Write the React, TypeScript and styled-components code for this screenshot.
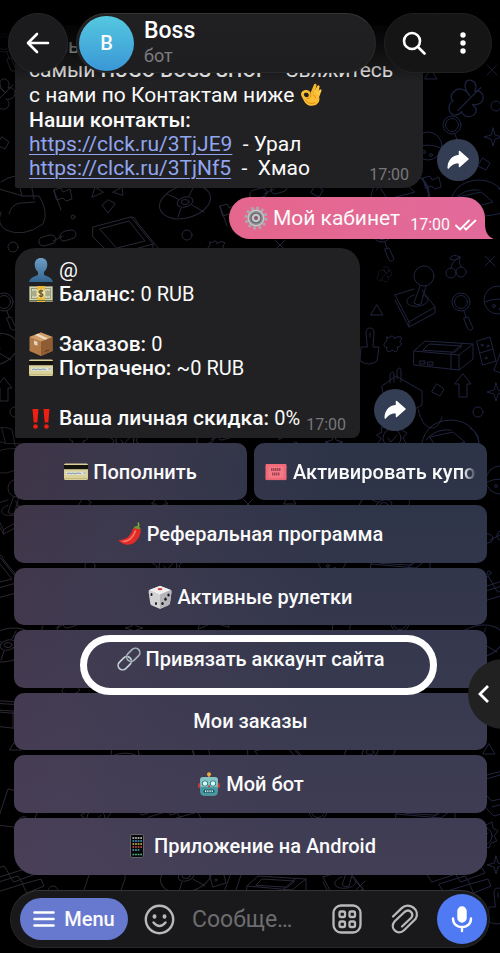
import React from "react";
import styled, { createGlobalStyle, css } from "styled-components";

const GlobalStyle = createGlobalStyle`
  *, *::before, *::after { box-sizing: border-box; }
  html, body { margin: 0; padding: 0; background: #000; }
  body, button, input {
    font-family: Roboto, "Noto Sans", sans-serif;
    color: #fafafa;
  }
  button { border: 0; padding: 0; background: none; cursor: pointer; }
`;

/* ---------- layout ---------- */

const Screen = styled.div`
  position: relative;
  display: flex;
  flex-direction: column;
  height: 100vh;
  overflow: hidden;
  isolation: isolate;
  background: #000;
`;

const WallpaperSvg = styled.svg`
  position: absolute;
  inset: 0;
  width: 100%;
  height: 100%;
  z-index: -1;
`;

const Header = styled.header`
  position: absolute;
  inset: 0 0 auto 0;
  z-index: 2;
  display: flex;
  gap: 8px;
  padding: 13px 8px 12px;
  background: linear-gradient(#000 0, rgba(0, 0, 0, 0.85) 30px, rgba(0, 0, 0, 0.4) 62px, rgba(0, 0, 0, 0) 82px);
`;

const glass = css`
  height: 60px;
  border-radius: 30px;
  border: 1px solid #29292b;
  border-top-color: #353537;
  background: linear-gradient(#202022, #1e1e20);
`;

const BackButton = styled.button`
  ${glass}
  flex: none;
  width: 60px;
  display: grid;
  place-items: center;
  background: #1b1b1d;
  border-color: #262628;
`;

const TitlePill = styled.div`
  ${glass}
  flex: 1;
  min-width: 0;
  display: flex;
  align-items: center;
  gap: 10px;
  padding-left: 2px;
`;

const Avatar = styled.div`
  flex: none;
  width: 55px;
  height: 55px;
  border-radius: 50%;
  display: grid;
  place-items: center;
  background: linear-gradient(#55c8e0, #3a97d6);
  font-size: 20px;
  font-weight: 500;
`;

const Title = styled.h1`
  margin: 0;
  font-size: 23px;
  line-height: 26px;
  font-weight: 500;
  color: #fff;
`;

const Subtitle = styled.div`
  font-size: 18px;
  line-height: 24px;
  color: #7d7d80;
`;

const ActionsPill = styled.div`
  ${glass}
  flex: none;
  width: 108px;
  display: grid;
  grid-template-columns: 1fr 1fr;
  padding: 0 4px;
  background: #151516;
  border-color: #212122;
`;

const IconButton = styled.button`
  display: grid;
  place-items: center;
`;

const Chat = styled.main`
  flex: 1;
  min-height: 0;
  display: flex;
  flex-direction: column;
  justify-content: flex-end;
  padding: 0 13px 15px 14px;
`;

const MessageRow = styled.div<{ $own?: boolean; $gap?: number }>`
  flex: none;
  display: flex;
  align-items: flex-end;
  justify-content: ${(p) => (p.$own ? "flex-end" : "flex-start")};
  gap: 14px;
  margin-bottom: ${(p) => p.$gap ?? 9}px;
  padding: ${(p) => (p.$own ? "0 2px 0 0" : "0 0 0 1px")};
`;

const Bubble = styled.article<{ $wide?: boolean }>`
  position: relative;
  width: ${(p) => (p.$wide ? 408 : 345)}px;
  max-width: 87%;
  padding: ${(p) => (p.$wide ? "9px 14px 8px" : "10px 14px 8px")};
  border-radius: 20px 20px ${(p) => (p.$wide ? 20 : 8)}px 2px;
  background: #212123;
  font-size: 21px;
  line-height: 24px;
  white-space: nowrap;
`;

const Line = styled.div`
  display: flex;
  align-items: center;
  gap: 6px;
  min-height: 24px;
`;

const Paragraph = styled.div`
  margin-bottom: 1px;
`;

const Spacer = styled.div`
  height: 26px;
`;

const Split = styled.div`
  display: flex;
  align-items: flex-end;
  justify-content: space-between;
`;

const Strong = styled.b`
  font-weight: 500;
`;

const Brand = styled(Strong)`
  font-size: 20px;
`;

const Value = styled.span`
  font-size: 20px;
`;

const Link = styled.a`
  color: #91a5f0;
  text-decoration: underline;
  text-decoration-thickness: 1px;
  text-underline-offset: 3px;
`;

const Time = styled.time`
  font-size: 16px;
  line-height: 16px;
  color: #77777b;
  margin-bottom: -3px;
`;

const ShareButton = styled.button`
  flex: none;
  width: 42px;
  height: 42px;
  margin-bottom: 7px;
  border-radius: 50%;
  display: grid;
  place-items: center;
  background: #333d53;
`;

const OwnBubble = styled.article`
  position: relative;
  display: flex;
  align-items: center;
  gap: 5px;
  height: 42px;
  padding: 0 8px 0 15px;
  border-radius: 21px 21px 4px 21px;
  background: linear-gradient(90deg, #e5668d, #e26a9a);
  font-size: 21px;
  white-space: nowrap;
`;

const OwnMeta = styled.span`
  display: flex;
  align-items: center;
  gap: 5px;
  margin: 14px 0 0 5px;
  font-size: 16px;
  line-height: 16px;
`;

const Tail = styled.svg`
  position: absolute;
  right: -8px;
  bottom: 0;
`;

const Keyboard = styled.div`
  flex: none;
  display: grid;
  grid-template-columns: 1fr 1fr;
  grid-template-rows: repeat(7, 1fr);
  column-gap: 7px;
  row-gap: 5px;
  height: 432px;
`;

const Key = styled.button<{ $half?: boolean; $last?: boolean }>`
  position: relative;
  grid-column: ${(p) => (p.$half ? "auto" : "1 / -1")};
  min-width: 0;
  display: flex;
  align-items: center;
  justify-content: center;
  gap: 5px;
  padding: 0 10px;
  border-radius: ${(p) => (p.$last ? "10px 10px 22px 22px" : "10px")};
  background:
    linear-gradient(180deg, rgba(86, 72, 100, 0) 480px, rgba(86, 72, 100, 0.5) 880px) fixed,
    linear-gradient(100deg, #413244 14px, #3b384c 200px, #2d3448 420px) fixed;
  font-size: 20px;
  font-weight: 500;
  white-space: nowrap;
`;

const KeyLabel = styled.span<{ $fade?: boolean }>`
  min-width: 0;
  overflow: hidden;
  ${(p) =>
    p.$fade &&
    css`
      mask-image: linear-gradient(90deg, #000 calc(100% - 14px), transparent);
    `}
`;

const Highlight = styled.span`
  position: absolute;
  z-index: 1;
  top: 5px;
  left: 66px;
  right: 50px;
  height: 60px;
  border: 7px solid #fff;
  border-radius: 30px;
  pointer-events: none;
`;

const SideTab = styled.button`
  position: absolute;
  z-index: 2;
  right: -38px;
  bottom: 224px;
  width: 70px;
  height: 70px;
  border-radius: 50%;
  background: #212122;
  display: flex;
  align-items: center;
  padding-left: 9px;
`;

const Composer = styled.form`
  flex: none;
  display: flex;
  align-items: center;
  height: 58px;
  margin: 0 10px 5px;
  padding: 0 2px 0 9px;
  border: 1px solid #252527;
  border-top-color: #343436;
  border-radius: 29px;
  background: #19191b;
`;

const MenuButton = styled.button`
  flex: none;
  display: flex;
  align-items: center;
  justify-content: center;
  gap: 9px;
  width: 108px;
  height: 42px;
  margin-right: 16px;
  border-radius: 21px;
  background: #6679cf;
  font-size: 20px;
  font-weight: 500;
`;

const MessageInput = styled.input`
  flex: 1;
  min-width: 0;
  margin: 0 38px 0 17px;
  padding: 0;
  border: 0;
  outline: 0;
  background: none;
  font-size: 23px;
  text-overflow: ellipsis;
  &::placeholder { color: #6d6d70; opacity: 1; }
`;

const AttachButton = styled(IconButton)`
  margin: 0 18px 0 29px;
`;

const MicButton = styled.button`
  flex: none;
  width: 50px;
  height: 50px;
  border-radius: 50%;
  display: grid;
  place-items: center;
  background: #5079f4;
`;

const EmojiSvg = styled.svg`
  flex: none;
  display: inline-block;
  vertical-align: -4px;
`;

/* ---------- emoji ---------- */

type EmojiProps = { size?: number; label: string; children: React.ReactNode };
const Emoji = ({ size = 24, label, children }: EmojiProps) => (
  <EmojiSvg width={size} height={size} viewBox="0 0 24 24" role="img" aria-label={label}>
    {children}
  </EmojiSvg>
);

const Person = () => (
  <Emoji label="👤">
    <defs>
      <linearGradient id="person" x1="0" y1="0" x2="0" y2="1">
        <stop offset="0" stopColor="#6d9dc6" />
        <stop offset="1" stopColor="#34658f" />
      </linearGradient>
    </defs>
    <path d="M12 0c4 0 6.300 2.700 6.300 6.500 0 3-1.300 6-3.300 7.500v2.500c0 1.500 8 2 9 7.500H0c1-5.500 9-6 9-7.500V14c-2-1.500-3.300-4.500-3.300-7.500C5.700 2.700 8 0 12 0z" fill="url(#person)" />
  </Emoji>
);

const Banknote = () => (
  <Emoji label="💵">
    <rect x="0" y="4" width="24" height="16" rx="1" fill="#8d9273" />
    <rect x="1" y="5" width="22" height="13" fill="#d3d5b8" />
    <rect x="2.500" y="6.500" width="19" height="10" fill="none" stroke="#858a68" strokeWidth=".8" />
    <circle cx="5.500" cy="11.500" r="3" fill="#a6ab8d" />
    <circle cx="18.500" cy="11.500" r="3" fill="#a6ab8d" />
    <rect x="8" y="4" width="8" height="16" fill="#eab936" />
    <circle cx="12" cy="11.500" r="4.500" fill="#f4e4a0" />
    <path d="M14 9.500c-1-1.500-4-1.300-4 .5s4 1 4 3-3 2-4 .4M12 7.500v8" fill="none" stroke="#68572b" strokeWidth="1.300" />
    <path d="M0 18.500h24" stroke="#6b704f" />
  </Emoji>
);

const Package = () => (
  <Emoji label="📦">
    <path d="M0.500 5 12 0.500 23.500 5v14L12 24 .5 19z" fill="#b27a48" />
    <path d="M12 9v15l11.500-5V5z" fill="#8f5c33" />
    <path d="M.5 5 12 .5 23.500 5 12 9.500z" fill="#cf9c6b" />
    <path d="m6 2.900 3-1.200L19 6.500l-3 1.300z" fill="#ecdcc3" />
    <path d="m5 8.500 3.500 1.300v4L5 12.500z" fill="#e5d5bd" />
    <path d="m16 19.500 4-1.600" stroke="#5c3617" />
  </Emoji>
);

const Card = () => (
  <Emoji label="💳">
    <rect x="0" y="3.500" width="24" height="16.500" rx="1.500" fill="#d9d09a" />
    <rect x="0" y="5" width="24" height="4.200" fill="#14130d" />
    <rect x="2" y="11.500" width="20" height="3.500" fill="#dde0cf" />
    <path d="m3 13.800 2-.8 2 .8 2-.8 2 .8 3-.8 3 .6M19.500 13h2" stroke="#6d86a8" strokeWidth=".8" fill="none" />
    <path d="M0 18.500h24" stroke="#bfb47a" strokeWidth=".8" />
  </Emoji>
);

const Exclamation = () => (
  <Emoji label="‼️">
    <path d="M3.500 3h6L8.300 16.500H4.700zM14.500 3h6l-1.200 13.500h-3.600z" fill="#ee2013" />
    <circle cx="6.500" cy="20.500" r="2.300" fill="#ee2013" />
    <circle cx="17.500" cy="20.500" r="2.300" fill="#ee2013" />
  </Emoji>
);

const OkHand = () => (
  <Emoji label="👌" size={23}>
    <path d="M10.500 11.500 14.500 1.800c.8-1.900 3.200-1 2.700.9L15.500 9.500z" fill="#f9b52b" />
    <path d="M14 10.500 18 3.200c.9-1.700 2.900-.7 2.400 1L18.500 12z" fill="#fcc438" />
    <path d="M16.500 12 20.200 7c1-1.300 2.700-.3 2.200 1.200l-2.600 7z" fill="#fdcb45" />
    <path d="M11 10.500c3-1.800 9.300.5 9.300 6 0 4.500-3.300 7.300-8 7.300-4.300 0-6.800-2.300-8.200-5.300L1.500 13.500C-.3 9 4.500 6.500 8 7.500c1.700.5 2.800 1.600 3 3z" fill="#fbbd33" />
    <path d="M4.200 12.800c-.8-2 1-3.200 3-2.600 1.800.6 2.600 2.400 1.600 3.800-1.200 1.400-3.800.8-4.600-1.200z" fill="#212123" />
    <path d="M10.800 10.800c1.400 2.500.2 5.600-3.300 5.500M5.500 17.500c2.500 4 6.500 4.800 10.500 3M14 12.500l2.500 3" fill="none" stroke="#dd8a12" strokeWidth="1" strokeLinecap="round" />
  </Emoji>
);

const GearEmoji = () => (
  <Emoji label="⚙️">
    <circle cx="12" cy="12" r="10" fill="none" stroke="#a9abae" strokeWidth="3.200" strokeDasharray="2.600 2.636" />
    <circle cx="12" cy="12" r="8.500" fill="#8e9194" />
    <circle cx="12" cy="12" r="7.800" fill="none" stroke="#c5c7ca" strokeWidth="1.400" />
    <circle cx="12" cy="12" r="5.600" fill="#65696d" />
    <circle cx="12" cy="12" r="4.300" fill="#c3c6c9" />
    <circle cx="12" cy="12" r="2" fill="#8a5568" />
  </Emoji>
);

const Ticket = () => (
  <Emoji label="🎟">
    <path d="M2 4.500h20v2a1 1 0 0 1 0 1.600v8a1 1 0 0 1 0 1.500v2H2v-2a1 1 0 0 1 0-1.500V8a1 1 0 0 1 0-1.500z" fill="#f06a78" stroke="#f06a78" strokeLinejoin="round" />
    <rect x="4.500" y="6.500" width="15" height="11" fill="#f37a86" />
    <path d="M7 9.500h10M8 14h8" stroke="#a34551" strokeWidth="3" strokeDasharray="1.500 .5" />
  </Emoji>
);

const Pepper = () => (
  <Emoji label="🌶">
    <path d="M.5 18C8 18 12 14.500 14.500 8c1-3 3-4 5.200-3.200 3 1 3.500 3.500 2.800 6.200C20.500 19 14 24 7.500 22.500 4.500 22 1.500 20 .5 18z" fill="#e02b29" />
    <path d="M5 19.500c6 0 10-4 12.500-10.500" stroke="#fa766b" strokeWidth="1.600" fill="none" strokeLinecap="round" />
    <path d="M15.500 6.500c2-3.500 5-3 7.500.5-2-1-2.500.5-3.500 0-1.500-.6-2.500-1-4-.5z" fill="#6d9c30" />
    <path d="M20 5c1-1.500 1-3 0-4.500" stroke="#80ab3c" strokeWidth="1.600" fill="none" />
  </Emoji>
);

const Die = () => (
  <Emoji label="🎲">
    <path d="M2 4.500 12 .8 22 4.500Q24 5.300 23.500 7L22 18q-.2 1.500-2 2.500L13 23.500q-1 .4-2 0L4 20.500Q2.500 20 2.200 18L.6 7Q.3 5.200 2 4.500z" fill="#d2d2d4" />
    <path d="M1.500 5 12 1l10.500 4L12 9.500z" fill="#f0f0f1" />
    <path d="M12 9.500v14q.5 0 1-.2l7-3q1.700-.8 2-2.300l1.500-11q.2-1.200-.7-2z" fill="#b6b6ba" />
    <ellipse cx="12" cy="4.200" rx="2.400" ry="1.100" fill="#db3d3c" />
    <g fill="#19191b">
      <ellipse cx="3.500" cy="9.500" rx="1" ry="1.500" /><ellipse cx="8" cy="18.500" rx="1" ry="1.500" />
      <ellipse cx="20.500" cy="10" rx="1.200" ry="1.600" /><ellipse cx="17.500" cy="14.200" rx="1.200" ry="1.600" /><ellipse cx="14.500" cy="18.500" rx="1.200" ry="1.600" />
    </g>
  </Emoji>
);

const Chain = () => (
  <Emoji label="🔗">
    <g fill="none" transform="rotate(-45 12 12)">
      <rect x="-1.500" y="7.500" width="15" height="9" rx="4.500" stroke="#7d8a94" strokeWidth="2" />
      <rect x="-1.500" y="7.500" width="15" height="9" rx="4.500" stroke="#dbe4e9" strokeWidth="1" />
      <rect x="10.500" y="7.500" width="15" height="9" rx="4.500" stroke="#6d7a84" strokeWidth="2" />
      <rect x="10.500" y="7.500" width="15" height="9" rx="4.500" stroke="#b4c0c8" strokeWidth="1" />
    </g>
  </Emoji>
);

const Robot = () => (
  <Emoji label="🤖">
    <rect x="1" y="11" width="3" height="5" rx="1.500" fill="#c53b36" />
    <rect x="20" y="11" width="3" height="5" rx="1.500" fill="#c53b36" />
    <path d="M12 2v4" stroke="#b28346" strokeWidth="2" />
    <circle cx="12" cy="2.300" r="2" fill="#edab3c" />
    <path d="M6 5h12q3 0 3 3l-.5 12q-.2 3.500-3.500 3.500H7q-3.300 0-3.500-3.500L3 8q0-3 3-3z" fill="#86c3c5" />
    <path d="M3.300 15h17.400l-.2 5q-.2 3.500-3.500 3.500H7q-3.300 0-3.500-3.500z" fill="#459aa2" />
    <circle cx="8" cy="11.500" r="3" fill="#2a747c" /><circle cx="16" cy="11.500" r="3" fill="#2a747c" />
    <circle cx="8" cy="11.500" r="2.200" fill="#d5fbf7" /><circle cx="16" cy="11.500" r="2.200" fill="#d5fbf7" />
    <path d="m12 12.500 1.500 2.800h-3z" fill="#ce3a36" />
    <rect x="6.500" y="17.500" width="11" height="3.500" rx="1.500" fill="#1d5360" />
    <path d="M8 19.200h8" stroke="#cdeeee" strokeWidth="2" strokeDasharray="1.300 .9" />
  </Emoji>
);

const Phone = () => (
  <Emoji label="📱">
    <rect x="5.500" y=".5" width="13" height="23" rx="1.500" fill="#060708" stroke="#626467" />
    <g strokeWidth="1.700" fill="none">
      <path d="M7.500 4h9.500" stroke="#d7d9da" strokeDasharray="1.700 .9" />
      <path d="M7.500 7h9.500" stroke="#49a5d4" strokeDasharray="1.700 .9" />
      <path d="M7.500 10h9.500" stroke="#e6bf4e" strokeDasharray="1.700 .9" />
      <path d="M7.500 13h9.500" stroke="#d25447" strokeDasharray="1.700 .9" />
      <path d="M7.500 16h6.800" stroke="#5aa9c9" strokeDasharray="1.700 .9" />
      <path d="M7.500 20.500h9.500" stroke="#49bb84" strokeDasharray="1.700 .9" />
    </g>
  </Emoji>
);

/* ---------- interface icons ---------- */

const ShareIcon = () => (
  <svg width="22" height="20" viewBox="0 0 22 20" fill="#fff" stroke="#fff" strokeWidth="1.500" strokeLinejoin="round">
    <path d="M12.500 1.500 21 9l-8.500 7.500V12.500C7.500 12.500 4 14 1.200 18 1.200 11.500 5 6 12.500 5.500z" />
  </svg>
);

/* ---------- wallpaper ---------- */

const shapes: Record<string, React.ReactNode> = {
  clover: <path d="M0 0C-3-5-9-8-13-4c-4 3-3 7-1 8-4 2-5 8-1 11 3 2 7 0 8-2 1 4 8 6 11 2 2-3 1-6-2-8 4 1 9-1 9-6 0-4-4-6-7-5 2-3 1-8-3-9-5-1-8 5-1 13zM-10 12 9-7" />,
  cross: <path d="m-5-5 10 10M5-5-5 5" />,
  triangle: <path d="m0-6 6 10H-6z" />,
  circle: <circle r="5" />,
  dot: <circle r="2" />,
  star: <path d="M0-9 2-2l7 2-7 2-2 7-2-7-7-2 7-2z" />,
  cherries: <g><circle cx="-5" cy="6" r="5" /><circle cx="5" cy="5" r="5" /><path d="M-5 1Q-4-6 4-10 2-4 5 0M4-10q-8-4-10 2 6 3 10-2" /></g>,
  joystick: <g><circle cx="10" cy="-22" r="10" /><path d="m6-12-6 17q3 3 7 1l5-18M-19-3-5 24l26-15-13-17M-19-3 0-9M-19 2-5 29l26-14V9M-5 24v5" /><path d="M0-3c-12 4-8 13 5 11 11-2 11-9 4-11" /></g>,
  lens: <g><circle cy="-5" r="9" /><circle cy="-5" r="6.500" /><path d="m3 4 2 6m-2 1 4-1 5 11q-2 4-5 1z" /></g>,
  shovel: <path d="M-4-18q0-5 4-5t4 5L3-4h6l-2 14q-8 6-17 0L-9-4h6zM0-18v4" />,
  puzzle: <path d="M-7-7q3 2 4-1 4 0 3 3 4-4 8-1-4 4 0 6-3 4-5 3 2 4-2 5-3-4-5 0-5-1-3-5-3 1-3-3 4-3 3-7z" />,
  console: <path d="M-29-2-18-12 30-9v15l-14 11-45-5zM-29-2l45 4V17M16 2 30-9M-20-3l6-6 33 2-7 6zM-23 8h5v3h-5zM-15 9h5v3h-5zM8 1 20-10M8 1v15" />,
  domino: <g><path d="m-12-13 13-4 6 24-13 4zM-9-1l13-4M5 16 14-8l9 4-8 24z" /><circle cx="-7" cy="-9" r="1" /><circle cx="-1" cy="-8" r="1" /><circle cx="-3" cy="4" r="1" /></g>,
  arrow: <path d="m0-12 8 10H4v13h-8V-2h-4z" />,
  diamond: <path d="m-1-6 7 5-4 7-8-4z" />,
  plug: <path d="m-20-3 14-10L20 2v14Q6 26 0 14l-18-7zM-12-6v-9q3-4 4 0v8m3-3v-9q3-4 4 0V-7M16 20c5 24 20 24 24 8" />,
  gear: <g><circle r="9" /><path d="m-15-3 5-3-1-5 6 1 3-5 5 4 6-3 1 6 5 3-4 5 3 5-6 2-2 5-6-3-6 3-2-5-6-2 3-4zM-4 0l3 4 6-7" /></g>,
  flag: <path d="m-8-6 7-2 2 4 7-3 2 10-6 2-3-3-6 2zM-8-6-1 14" />,
  dpad: <path d="m-5-4-8-5-3 10zM5-4l9-5 1 8zM0 4l-6 5 6 8 7-9zM-4-10l8-1" />,
  disc: <g><ellipse rx="26" ry="16" transform="rotate(-15)" /><ellipse rx="8" ry="5" transform="rotate(-15)" /><ellipse rx="4" ry="2.500" /><path d="m-18-8 11 5M7 3l12 7M-4 6-7 15M4-6l4-8" /></g>,
  laptop: <path d="m-32-5 38-10 22 27v10l-34 9L-32 5zM-25-3 4-11 20 9l-28 7zM-8 22l36-10M6-15q5 0 5 4l22 27-6 2" />,
  chain: <path d="M-18 2q-1-5 4-6l7-2q6 0 6 5-1 4-5 4l-7 2q-4 0-5-3M3-5q1-4 5-5l6-1q5 0 5 5-1 4-5 4L7 0Q3 0 3-5M-4 0 6-5" />,
  cauldron: <path d="M-24-22Q-10-32 5-26L9-5M-8-28-3-8M-26-15-2-8H14q10 15 4 28-20 14-37 6-10-6-5-18M-16 10q2-10 12-11L10-2" />,
  brick: <path d="m-28-8 24-8 5 8-24 8zM1-8l25-8 4 7-24 9zM-16 2 10-6l5 8L-11 10zM15 2l18-5 3 7-17 7z" />,
  scroll: <path d="m-18 18 12-36 36 8q-4 1-3 5L17 22-18 18zM5 12q6-5 8 0t-7 4" />,
  helmet: <g><path d="M-28 14Q-26-20 4-20 30-18 32 10 14 20-28 14zM-18-3 5-8 17 2l-27 7zM-22 0q10-12 25-10" /><path d="M22-12q12 6 8 20" /></g>,
  pot: <g><circle r="14" /><path d="M-13 2Q0-4 13 2" /><circle cx="-4" cy="6" r="1.500" /><circle cx="3" cy="9" r="1.500" /></g>,
};

const doodles: [string, number, number, number?][] = [
  ["clover", 470, 96, 1.2], ["cross", 492, 70], ["triangle", 431, 75], ["lens", 452, 130], ["circle", 496, 106], ["circle", 492, 15], ["cross", 473, 8], ["dpad", 450, 10],
  ["pot", 428, 146], ["star", 493, 137], ["diamond", 484, 164], ["flag", 431, 184], ["helmet", 476, 200],
  ["clover", 4, 92], ["cross", 8, 8], ["diamond", 3, 143], ["lens", 4, 48],
  ["cauldron", 25, 204], ["flag", 62, 196], ["dpad", 108, 196], ["disc", 185, 202], ["dot", 73, 217], ["laptop", 125, 232], ["chain", 57, 241], ["circle", 187, 235], ["flag", 228, 212], ["circle", 13, 247], ["puzzle", 217, 249],
  ["chain", 268, 194], ["diamond", 317, 191], ["helmet", 398, 190], ["lens", 382, 238], ["cross", 280, 245],
  ["cherries", 456, 267], ["clover", 386, 273, 0.5], ["cross", 490, 261], ["joystick", 414, 298], ["lens", 461, 307], ["pot", 498, 300], ["triangle", 377, 311], ["shovel", 370, 351], ["puzzle", 394, 344], ["console", 443, 353], ["domino", 489, 354], ["arrow", 463, 386], ["diamond", 438, 390], ["star", 496, 392], ["circle", 478, 412], ["plug", 402, 389], ["gear", 392, 438], ["helmet", 448, 440],
  ["lens", 4, 307], ["disc", -8, 350], ["arrow", 4, 390], ["circle", 15, 412], ["cauldron", 8, 450, 0.8], ["joystick", 8, 508, 0.9], ["laptop", -8, 570], ["disc", 8, 645], ["console", 5, 712], ["triangle", 16, 746], ["brick", 8, 882], ["scroll", 14, 807],
  ["puzzle", 80, 438], ["gear", 125, 440], ["chain", 215, 440], ["dpad", 295, 438], ["star", 334, 442], ["pot", 500, 480], ["chain", 494, 540], ["brick", 492, 592], ["dot", 489, 573], ["disc", 478, 642], ["triangle", 489, 750], ["laptop", 500, 785], ["gear", 483, 836], ["brick", 455, 882], ["star", 496, 865], ["shovel", 498, 911],
  ["diamond", 85, 503], ["arrow", 160, 506], ["triangle", 290, 500], ["disc", 384, 505], ["cross", 248, 504], ["circle", 90, 566], ["gear", 168, 566], ["pot", 332, 560], ["console", 400, 566], ["chain", 60, 628], ["star", 134, 628], ["dpad", 214, 628], ["shovel", 342, 624], ["lens", 400, 628],
  ["puzzle", 72, 690], ["pot", 125, 754], ["laptop", 280, 754], ["disc", 370, 752], ["flag", 200, 754], ["gear", 96, 818], ["brick", 165, 815], ["lens", 318, 816], ["console", 425, 816],
  ["scroll", 98, 884], ["disc", 186, 876], ["domino", 219, 876], ["console", 276, 888], ["joystick", 342, 880], ["cross", 360, 886], ["circle", 53, 891],
];

const Wallpaper = () => (
  <WallpaperSvg viewBox="0 0 500 953" preserveAspectRatio="xMidYMid slice" aria-hidden="true">
    <defs>
      <linearGradient id="ink" gradientUnits="userSpaceOnUse" x1="0" y1="500" x2="500" y2="400">
        <stop offset="0" stopColor="#2b2731" />
        <stop offset="0.500" stopColor="#272738" />
        <stop offset="1" stopColor="#1d2240" />
      </linearGradient>
      <mask id="doodle-mask" maskUnits="userSpaceOnUse" x="0" y="0" width="500" height="953">
        <g fill="none" stroke="#fff" strokeLinejoin="round" strokeLinecap="round">
          {doodles.map(([name, x, y, scale = 1], i) => (
            <g key={i} transform={`translate(${x} ${y}) scale(${scale})`}>{shapes[name]}</g>
          ))}
        </g>
      </mask>
    </defs>
    <rect width="500" height="953" fill="url(#ink)" mask="url(#doodle-mask)" />
  </WallpaperSvg>
);

/* ---------- data ---------- */

type KeyData = { label: string; icon?: React.ReactNode; half?: boolean; fade?: boolean; marked?: boolean };

const keys: KeyData[] = [
  { label: "Пополнить", icon: <Card />, half: true },
  { label: "Активировать купон", icon: <Ticket />, half: true, fade: true },
  { label: "Реферальная программа", icon: <Pepper /> },
  { label: "Активные рулетки", icon: <Die /> },
  { label: "Привязать аккаунт сайта", icon: <Chain />, marked: true },
  { label: "Мои заказы" },
  { label: "Мой бот", icon: <Robot /> },
  { label: "Приложение на Android", icon: <Phone /> },
];

export default function App() {
  return (
    <>
      <GlobalStyle />
      <Screen>
        <Wallpaper />
        <Header>
          <BackButton aria-label="Назад">
            <svg width="24" height="22" viewBox="0 0 24 22" fill="none" stroke="#fff" strokeWidth="2.600" strokeLinecap="round" strokeLinejoin="round">
              <path d="M22 11H2.500M11 2 2 11l9 9" />
            </svg>
          </BackButton>
          <TitlePill>
            <Avatar>B</Avatar>
            <div>
              <Title>Boss</Title>
              <Subtitle>бот</Subtitle>
            </div>
          </TitlePill>
          <ActionsPill>
            <IconButton aria-label="Поиск">
              <svg width="24" height="24" viewBox="0 0 24 24" fill="none" stroke="#fff" strokeWidth="2.600" strokeLinecap="round">
                <circle cx="10" cy="10" r="8" />
                <path d="m16 16 6.500 6.500" />
              </svg>
            </IconButton>
            <IconButton aria-label="Ещё">
              <svg width="6" height="22" viewBox="0 0 6 22" fill="#fff">
                <circle cx="3" cy="3" r="2.700" /><circle cx="3" cy="11" r="2.700" /><circle cx="3" cy="19" r="2.700" />
              </svg>
            </IconButton>
          </ActionsPill>
        </Header>

        <Chat>
          <MessageRow>
            <Bubble $wide>
              <Paragraph>
                Новый<br />
                самый <Brand>HUGO BOSS SHOP</Brand> - Свяжитесь
              </Paragraph>
              <Paragraph>с нами по Контактам ниже <OkHand /></Paragraph>
              <div><Strong>Наши контакты:</Strong></div>
              <div><Link href="https://clck.ru/3TjJE9">https://clck.ru/3TjJE9</Link>&nbsp; - Урал</div>
              <Split>
                <span><Link href="https://clck.ru/3TjNf5">https://clck.ru/3TjNf5</Link>&nbsp; -&nbsp; Хмао</span>
                <Time>17:00</Time>
              </Split>
            </Bubble>
            <ShareButton aria-label="Переслать"><ShareIcon /></ShareButton>
          </MessageRow>

          <MessageRow $own>
            <OwnBubble>
              <GearEmoji />
              <span>Мой кабинет</span>
              <OwnMeta>
                17:00
                <svg width="22" height="12" viewBox="0 0 22 12" fill="none" stroke="#fff" strokeWidth="1.800" strokeLinecap="round" strokeLinejoin="round">
                  <path d="m1 6.500 4 4L14 1.500M9.500 9l1.500 1.500L20.500 1.500" />
                </svg>
              </OwnMeta>
              <Tail width="16" height="16" viewBox="0 0 16 16" fill="#e26a9a">
                <path d="M0 0h8c0 8 2 13 8 15.500V16H0z" />
              </Tail>
            </OwnBubble>
          </MessageRow>

          <MessageRow $gap={5}>
            <Bubble>
              <Line><Person />@</Line>
              <Line><Banknote /><span><Strong>Баланс:</Strong> <Value>0 RUB</Value></span></Line>
              <Spacer />
              <Line><Package /><span><Strong>Заказов:</Strong> <Value>0</Value></span></Line>
              <Line><Card /><span><Strong>Потрачено:</Strong> <Value>~0 RUB</Value></span></Line>
              <Spacer />
              <Split>
                <Line><Exclamation /><span><Strong>Ваша личная скидка:</Strong> <Value>0%</Value></span></Line>
                <Time>17:00</Time>
              </Split>
            </Bubble>
            <ShareButton aria-label="Переслать"><ShareIcon /></ShareButton>
          </MessageRow>

          <Keyboard>
            {keys.map((k, i) => (
              <Key key={k.label} type="button" $half={k.half} $last={i === keys.length - 1}>
                {k.icon}
                <KeyLabel $fade={k.fade}>{k.label}</KeyLabel>
                {k.marked && <Highlight />}
              </Key>
            ))}
          </Keyboard>
        </Chat>

        <Composer onSubmit={(e) => e.preventDefault()}>
          <MenuButton type="button">
            <svg width="22" height="18" viewBox="0 0 22 18" stroke="#fff" strokeWidth="2.600" strokeLinecap="round">
              <path d="M1.500 2.500h19M1.500 9h19M1.500 15.500h19" />
            </svg>
            Menu
          </MenuButton>
          <IconButton type="button" aria-label="Эмодзи">
            <svg width="31" height="31" viewBox="0 0 31 31" fill="none" stroke="#b9b9bb" strokeWidth="2.400" strokeLinecap="round">
              <circle cx="15.500" cy="15.500" r="13.700" />
              <path d="M9.500 18.500q6 7 12 0" />
              <ellipse cx="10.500" cy="12.500" rx=".8" ry="1" fill="#b9b9bb" /><ellipse cx="20.500" cy="12.500" rx=".8" ry="1" fill="#b9b9bb" />
            </svg>
          </IconButton>
          <MessageInput aria-label="Сообщение" placeholder="Сообщение" />
          <IconButton type="button" aria-label="Команды">
            <svg width="30" height="30" viewBox="0 0 30 30" fill="none" stroke="#b9b9bb" strokeWidth="2.300">
              <rect x="1.500" y="1.500" width="27" height="27" rx="7.500" />
              <rect x="7.500" y="7.500" width="5.500" height="5.500" rx="1.500" /><rect x="17.500" y="7.500" width="5.500" height="5.500" rx="1.500" />
              <rect x="7.500" y="17.500" width="5.500" height="5.500" rx="1.500" /><rect x="17.500" y="17.500" width="5.500" height="5.500" rx="1.500" />
            </svg>
          </IconButton>
          <AttachButton type="button" aria-label="Прикрепить">
            <svg width="28" height="30" viewBox="0 0 28 30" fill="none" stroke="#b9b9bb" strokeWidth="2.300" strokeLinecap="round" strokeLinejoin="round">
              <path d="M2 12.500 11 3.800C17.500-2.500 30 5.500 24.500 15L13 26.300C7 32-2 24.500 3.500 17.500L13.500 8c5-4 10 1.500 6.500 6l-9 8.500" />
            </svg>
          </AttachButton>
          <MicButton type="button" aria-label="Голосовое сообщение">
            <svg width="22" height="28" viewBox="0 0 22 28" fill="none" stroke="#fff" strokeWidth="2.400" strokeLinecap="round">
              <rect x="7.500" y="2.500" width="7" height="14" rx="3.500" fill="#fff" />
              <path d="M2 13.500C2 25 20 25 20 13.500M11 22v4" />
            </svg>
          </MicButton>
        </Composer>

        <SideTab aria-label="Открыть панель">
          <svg width="13" height="20" viewBox="0 0 13 20" fill="none" stroke="#fff" strokeWidth="2.800">
            <path d="m11 2-8 8 8 8" />
          </svg>
        </SideTab>
      </Screen>
    </>
  );
}
